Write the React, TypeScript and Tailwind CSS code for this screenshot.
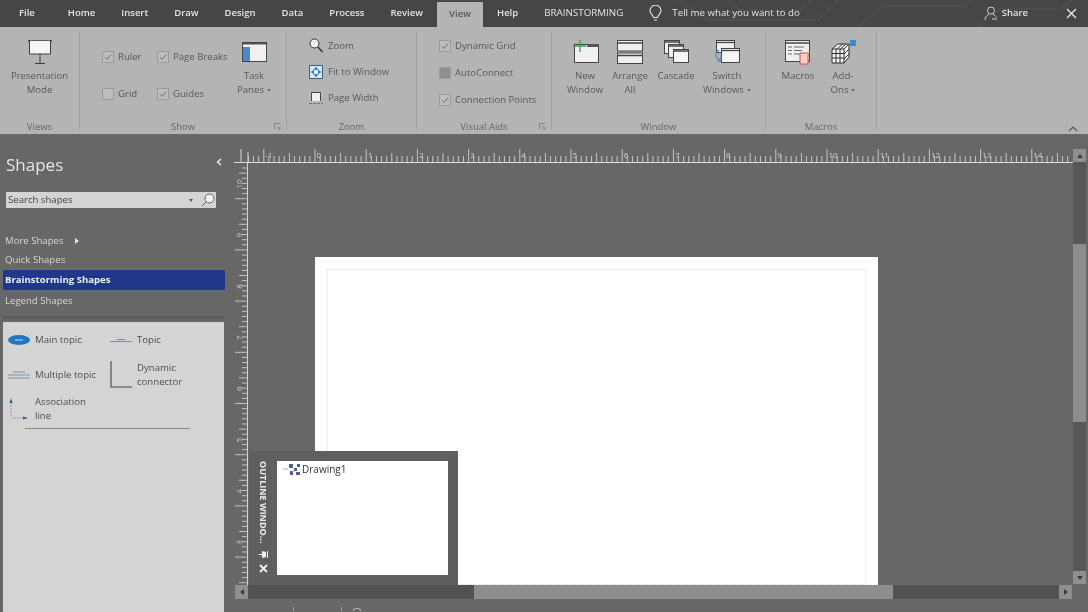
import type { ReactNode } from "react";

const tabs = ["Home", "Insert", "Draw", "Design", "Data", "Process", "Review"];

const hTicks = Array.from({ length: 170 }, (_, i) => i);
const hLabels = Array.from({ length: 17 }, (_, i) => i - 2);
const vLabels = [10, 9, 8, 7, 6, 5, 4, 3];

const Check = ({ on, dark }: { on?: boolean; dark?: boolean }) => (
  <span
    className={`flex h-[12px] w-[12px] shrink-0 items-center justify-center border border-[#9a9a9a] ${
      dark ? "bg-[#8f8f8f]" : "bg-[#bdbdbd]"
    }`}
  >
    {on && (
      <svg width="10" height="10" viewBox="0 0 10 10" fill="none">
        <path d="M2 5.2 4.2 7.4 8.2 2.6" stroke="#6e6e6e" strokeWidth="1" />
      </svg>
    )}
  </span>
);

const CheckRow = ({ label, on, dark }: { label: string; on?: boolean; dark?: boolean }) => (
  <div className="flex items-center gap-[4px] whitespace-nowrap">
    <Check on={on} dark={dark} />
    <span>{label}</span>
  </div>
);

const Caret = () => <span className="ml-[3px] inline-block h-0 w-0 border-x-[2.5px] border-t-[3px] border-x-transparent border-t-[#707070] align-middle" />;

const BigButton = ({ icon, lines, caret, w }: { icon: ReactNode; lines: string[]; caret?: boolean; w: string }) => (
  <div className={`flex shrink-0 flex-col items-center ${w}`}>
    <div className="flex h-[28px] items-center justify-center">{icon}</div>
    <div className="mt-[3px] flex flex-col items-center leading-[14px]">
      {lines.map((l, i) => (
        <span key={l} className="whitespace-nowrap">
          {l}
          {caret && i === lines.length - 1 && <Caret />}
        </span>
      ))}
    </div>
  </div>
);

const Launcher = () => (
  <svg className="absolute bottom-0 right-[5px]" width="7" height="7" viewBox="0 0 7 7" fill="none" stroke="#7a7a7a" strokeWidth="0.8">
    <path d="M.5 6V.5H6M3 3l3 3M6 3.5V6H3.5" />
  </svg>
);

const Group = ({ label, w, launcher, children }: { label: string; w: string; launcher?: boolean; children: ReactNode }) => (
  <div className={`relative flex h-[98px] shrink-0 flex-col border-r border-[#a0a0a0] ${w}`}>
    <div className="flex-1">{children}</div>
    <div className="-mb-[4px] text-center text-[9.5px] leading-[14px] text-[#666666]">{label}</div>
    {launcher && <Launcher />}
  </div>
);

const Ruler = () => (
  <svg width="839" height="15" className="block">
    <line x1="0" x2="839" y1="14.5" y2="14.5" stroke="#dedede" />
    <line x1="7" x2="7" y1="1" y2="15" stroke="#d8d8d8" />
    <line x1="14" x2="14" y1="4" y2="15" stroke="#d8d8d8" />
    {hTicks.map((i) => {
      const x = 81 + ((i - 20) * 51.2) / 10;
      if (x < 14 || x > 838) return null;
      const n = i % 10;
      const h = n === 0 ? 13 : n === 5 ? 9 : 6;
      return <line key={i} x1={x} x2={x} y1={14 - h} y2="14" stroke="#d0d0d0" strokeWidth="0.9" />;
    })}
    {hLabels.map((n) => {
      const x = 81 + n * 51.2;
      if (x < 14) return null;
      return (
        <text key={n} x={x + 1.5} y="9.5" fontSize="8" fill="#d4d4d4" fontFamily="Open Sans, sans-serif">
          {n}
        </text>
      );
    })}
  </svg>
);

const VRuler = () => (
  <svg width="14" height="422" className="block shrink-0">
    <line x1="13.5" x2="13.5" y1="0" y2="422" stroke="#d4d4d4" />
    {Array.from({ length: 84 }, (_, i) => i).map((i) => {
      const y = 5 + i * 5.12;
      const n = i % 10;
      const w = n === 6 ? 13 : n === 1 ? 9 : 6;
      return <line key={i} x1={14 - w} x2="14" y1={y} y2={y} stroke="#cdcdcd" strokeWidth="0.9" />;
    })}
    {vLabels.map((n, i) => (
      <text
        key={n}
        x="0"
        y="0"
        fontSize="8"
        fill="#d0d0d0"
        fontFamily="Open Sans, sans-serif"
        textAnchor="middle"
        transform={`translate(8 ${21 + i * 51.2}) rotate(-90)`}
      >
        {n}
      </text>
    ))}
  </svg>
);

const Arrow = ({ dir }: { dir: "up" | "down" | "left" | "right" }) => {
  const rot = { up: 0, right: 90, down: 180, left: 270 }[dir];
  return (
    <svg width="8" height="8" viewBox="0 0 8 8" style={{ transform: `rotate(${rot}deg)` }}>
      <path d="M4 2 7 6H1z" fill="#3c3c3c" />
    </svg>
  );
};

export default function App() {
  return (
    <div className="flex h-[612px] w-[1088px] flex-col overflow-hidden bg-[#676767] font-['Open_Sans',sans-serif] blur-[0.4px]">
      {/* title + tabs */}
      <div className="relative flex h-[27px] shrink-0 items-center bg-[#464646] text-[9.5px] font-semibold text-[#e4e4e4]">
        <svg className="absolute right-0 top-0" width="450" height="27" fill="none" stroke="#555555" strokeWidth="1">
          <path d="M40 0 70 20H180L200 0M90 0l12 10h60L175 0M220 27 245 6h80l10-6M340 27l22-18h60l12-9" />
        </svg>
        <span className="ml-[19px] mr-[20px]">File</span>
        {tabs.map((t) => (
          <span key={t} className="px-[13px]">
            {t}
          </span>
        ))}
        <span className="ml-[1px] mt-[2px] flex h-[25px] w-[46px] items-center justify-center self-end bg-[#b4b4b4] text-[#555555]">View</span>
        <span className="px-[14px]">Help</span>
        <span className="ml-[12px] text-[9.8px] font-normal">BRAINSTORMING</span>
        <svg className="ml-[26px]" width="13" height="17" viewBox="0 0 13 17" fill="none" stroke="#e4e4e4" strokeWidth="1.1">
          <path d="M4.5 12.5C4.3 10 1 8.8 1 5.8a5.5 5.5 0 0 1 11 0c0 3-3.3 4.2-3.5 6.7zM5 15h3" />
        </svg>
        <span className="relative ml-[10px] text-[9.7px] font-normal">Tell me what you want to do</span>
        <div className="relative ml-auto flex items-center">
          <svg width="14" height="15" viewBox="0 0 14 15" fill="none" stroke="#cfcfcf" strokeWidth="1">
            <circle cx="7" cy="4.5" r="3.5" />
            <path d="M1 14c0-3 2-5 4-5.500M9 8.500c1.500.5 3 1.500 3.500 3M8 13h5" />
          </svg>
          <span className="ml-[4px]">Share</span>
          <svg className="ml-[38px] mr-[11px]" width="11" height="11" viewBox="0 0 11 11" stroke="#e8e8e8" strokeWidth="1.4">
            <path d="M1 1l9 9M10 1l-9 9" />
          </svg>
        </div>
      </div>

      {/* ribbon */}
      <div className="relative flex h-[107px] shrink-0 items-start bg-[#b4b4b4] pt-[5px] text-[9.6px] leading-[14px] text-[#585858]">
        <Group label="Views" w="w-[80px]">
          <div className="pt-[6px]">
            <BigButton
              w="w-[79px]"
              lines={["Presentation", "Mode"]}
              icon={
                <svg width="26" height="25" viewBox="0 0 26 25" fill="none" stroke="#3f3f3f" strokeWidth="1">
                  <path d="M1 1h24" strokeWidth="1.5" />
                  <path d="M2.500 1v13h21V1" fill="#f4f4f4" />
                  <path d="M13 14v9M8 23.500h10" />
                </svg>
              }
            />
          </div>
        </Group>

        <Group label="Show" w="w-[207px]" launcher>
          <div className="flex pt-[6px]">
            <div className="ml-[22px] flex w-[55px] flex-col gap-[23px] pt-[12px]">
              <CheckRow label="Ruler" on />
              <CheckRow label="Grid" />
            </div>
            <div className="flex w-[72px] flex-col gap-[23px] pt-[12px]">
              <CheckRow label="Page Breaks" on />
              <CheckRow label="Guides" on />
            </div>
            <BigButton
              w="w-[50px]"
              lines={["Task", "Panes"]}
              caret
              icon={
                <svg width="25" height="20" viewBox="0 0 25 20">
                  <rect x="0.500" y="0.500" width="24" height="19" fill="#f0f0f0" stroke="#444" />
                  <rect x="1" y="1" width="23" height="1.500" fill="#555" />
                  <rect x="1" y="5" width="7" height="14" fill="#4a8ac8" />
                </svg>
              }
            />
          </div>
        </Group>

        <Group label="Zoom" w="w-[130px]">
          <div className="flex flex-col gap-[12px] pl-[22px] pt-[6px]">
            <div className="flex items-center gap-[5px]">
              <svg width="14" height="15" viewBox="0 0 14 15" fill="none" stroke="#333" strokeWidth="1">
                <circle cx="5.500" cy="5.500" r="4.500" fill="#f2f2f2" />
                <path d="M9 9l4.500 5" strokeWidth="1.500" />
              </svg>
              <span>Zoom</span>
            </div>
            <div className="flex items-center gap-[5px]">
              <svg width="14" height="14" viewBox="0 0 14 14">
                <rect x="0.500" y="0.500" width="13" height="13" fill="#dbe7f2" stroke="#3d5f85" />
                <path d="M7 1.500 9.500 5h-5zM7 12.500 4.500 9h5zM1.500 7 5 4.500v5zM12.500 7 9 9.500v-5z" fill="#3f82c4" />
                <circle cx="7" cy="7" r="1.500" fill="#fff" />
              </svg>
              <span>Fit to Window</span>
            </div>
            <div className="flex items-center gap-[5px]">
              <svg width="14" height="14" viewBox="0 0 14 14" fill="none">
                <path d="M2.500 10V1.500h9V10" fill="#efefef" stroke="#444" />
                <path d="M0 12.500h14" stroke="#3f82c4" strokeWidth="1.200" strokeDasharray="3 1" />
              </svg>
              <span>Page Width</span>
            </div>
          </div>
        </Group>

        <Group label="Visual Aids" w="w-[135px]" launcher>
          <div className="flex flex-col gap-[13px] pl-[22px] pt-[7px]">
            <CheckRow label="Dynamic Grid" on />
            <CheckRow label="AutoConnect" dark />
            <CheckRow label="Connection Points" on />
          </div>
        </Group>

        <Group label="Window" w="w-[214px]">
          <div className="flex pl-[10px] pt-[6px]">
            <BigButton
              w="w-[46px]"
              lines={["New", "Window"]}
              icon={
                <svg width="27" height="24" viewBox="0 0 27 24">
                  <rect x="2.500" y="4.500" width="24" height="18" fill="#f0f0f0" stroke="#444" />
                  <rect x="15" y="4" width="12" height="3" fill="#555" />
                  <path d="M8 0v12M1 6h13" stroke="#35a04a" strokeWidth="1.300" />
                </svg>
              }
            />
            <BigButton
              w="w-[44px]"
              lines={["Arrange", "All"]}
              icon={
                <svg width="26" height="24" viewBox="0 0 26 24" stroke="#444">
                  <rect x="0.500" y="0.500" width="25" height="10.500" fill="#efefef" />
                  <rect x="0.500" y="13" width="25" height="10.500" fill="#efefef" />
                  <path d="M1 3h24M1 15.500h24" strokeWidth="1.500" />
                </svg>
              }
            />
            <BigButton
              w="w-[48px]"
              lines={["Cascade"]}
              icon={
                <svg width="25" height="24" viewBox="0 0 25 24" stroke="#444">
                  <rect x="0.500" y="0.500" width="15" height="13" fill="#efefef" />
                  <rect x="4.500" y="4.500" width="15" height="13" fill="#efefef" />
                  <rect x="9.500" y="9.500" width="15" height="13" fill="#f5f5f5" />
                  <path d="M1 2h14M5 6h14M10 11h14" strokeWidth="1.300" />
                </svg>
              }
            />
            <BigButton
              w="w-[54px]"
              lines={["Switch", "Windows"]}
              caret
              icon={
                <svg width="26" height="25" viewBox="0 0 26 25" fill="none" stroke="#444">
                  <rect x="2.500" y="0.500" width="18" height="12" fill="#efefef" />
                  <path d="M3 2.500h17" strokeWidth="1.300" />
                  <rect x="7.500" y="8.500" width="18" height="14" fill="#f5f5f5" />
                  <path d="M8 10.500h17" strokeWidth="1.300" />
                  <path d="M5 10c-4 2-4 7-1 9l3 2M7 17v4H3" stroke="#4a7fc0" strokeWidth="1.200" />
                </svg>
              }
            />
          </div>
        </Group>

        <Group label="Macros" w="w-[111px]">
          <div className="flex pl-[10px] pt-[6px]">
            <BigButton
              w="w-[44px]"
              lines={["Macros"]}
              icon={
                <svg width="27" height="25" viewBox="0 0 27 25">
                  <rect x="0.500" y="0.500" width="24" height="21" fill="#efefef" stroke="#444" />
                  <path d="M1 3h23" stroke="#444" strokeWidth="1.500" />
                  <path d="M3 7h4M9 7h10M3 10.500h4M9 10.500h8M3 14h4M9 14h6" stroke="#666" />
                  <path d="M15 13h10l-2 2v9h-8z" fill="#f5cfc9" stroke="#d84e3c" />
                </svg>
              }
            />
            <BigButton
              w="w-[46px]"
              lines={["Add-", "Ons"]}
              caret
              icon={
                <svg width="25" height="24" viewBox="0 0 25 24" fill="#f2f2f2" stroke="#2e2e2e" strokeWidth="1">
                  <path d="M1 9l6-5h11v13l-5 6H1z" />
                  <path d="M1 9h12v14M13 9l5-5M5 9v14M9 9v14M1 13.500h12M1 18h12M13 14l5-5M13 19l5-5M11.500 4 6 9M15 4 9.500 9" fill="none" />
                  <rect x="19" y="0" width="6" height="6" fill="#3f86cc" stroke="none" />
                </svg>
              }
            />
          </div>
        </Group>

        <svg className="absolute bottom-[2px] right-[10px]" width="10" height="6" viewBox="0 0 10 6" fill="none" stroke="#555" strokeWidth="1.100">
          <path d="M1 5l4-4 4 4" />
        </svg>
      </div>

      {/* body */}
      <div className="flex min-h-0 flex-1">
        {/* shapes pane */}
        <aside className="flex w-[225px] shrink-0 flex-col text-[9.6px] text-[#d6d6d6]">
          <div className="flex items-center justify-between pl-[6px] pr-[3px] pt-[17px]">
            <span className="text-[17px] leading-[28px] text-[#e6e6e6]">Shapes</span>
            <svg className="mb-[6px]" width="6" height="8" viewBox="0 0 6 8" fill="none" stroke="#f0f0f0" strokeWidth="1.400">
              <path d="M5 1 1.500 4 5 7" />
            </svg>
          </div>
          <div className="ml-[6px] mt-[13px] flex h-[16px] w-[210px] items-center bg-[#d4d4d4] pl-[2px] pr-[1px] text-[#444444]">
            <span className="pt-px">Search shapes</span>
            <span className="ml-auto mr-[8px] h-0 w-0 border-x-[2.5px] border-t-[3px] border-x-transparent border-t-[#555555]" />
            <svg width="14" height="14" viewBox="0 0 14 14" fill="#f2f2f2" stroke="#555" strokeWidth="0.900">
              <circle cx="8.500" cy="5.500" r="4.500" />
              <path d="M5 9l-4 4" />
            </svg>
          </div>
          <div className="mt-[26px] flex h-[14px] items-center pl-[5px] leading-[14px]">
            More Shapes
            <span className="ml-[11px] h-0 w-0 border-y-[3px] border-l-[4px] border-y-transparent border-l-[#e0e0e0]" />
          </div>
          <div className="mt-[2px] h-[20px] pl-[5px] leading-[20px]">Quick Shapes</div>
          <div className="ml-[3px] h-[20px] bg-[#20388c] pl-[2px] font-bold leading-[20px] text-[#f0f0f0]">Brainstorming Shapes</div>
          <div className="h-[21px] pl-[5px] leading-[21px]">Legend Shapes</div>
          <div className="ml-[3px] mt-[5px] h-[3px] w-[221px] bg-[#5a5a5a]" />
          <div className="ml-[3px] mr-px mt-[3px] flex-1 bg-[#d4d4d4] pt-[11px] leading-[14px] text-[#4e4e4e]">
            <div className="grid w-[221px] grid-cols-[107px_1fr]">
              <div className="flex h-[14px] items-center">
                <svg className="ml-[5px] mr-[5px] shrink-0" width="22" height="10" viewBox="0 0 22 10">
                  <ellipse cx="11" cy="5" rx="11" ry="5" fill="#1f78c4" />
                  <path d="M7 5h8" stroke="#bfe0f5" />
                </svg>
                <span>Main topic</span>
              </div>
              <div className="flex h-[14px] items-center">
                <svg className="mr-[5px] shrink-0" width="22" height="5" viewBox="0 0 22 5" stroke="#7b8d9e">
                  <path d="M0 3.500h22M7 1.500h8" />
                </svg>
                <span>Topic</span>
              </div>
              <div className="mt-[8px] flex h-[40px] items-center">
                <svg className="ml-[5px] mr-[5px] shrink-0" width="22" height="9" viewBox="0 0 22 9" stroke="#7f95a8">
                  <path d="M5 1h12M0 4h22M0 7h22" />
                </svg>
                <span>Multiple topic</span>
              </div>
              <div className="mt-[8px] flex h-[40px] items-center">
                <svg className="mb-[2px] mr-[5px] shrink-0" width="22" height="27" viewBox="0 0 22 27" fill="none" stroke="#444" strokeWidth="1.100">
                  <path d="M1 0v26h21" />
                </svg>
                <span>
                  Dynamic
                  <br />
                  connector
                </span>
              </div>
              <div className="flex h-[28px] items-center">
                <svg className="ml-[5px] mr-[6px] shrink-0" width="21" height="24" viewBox="0 0 21 24" fill="none">
                  <path d="M3 5v13c0 2 1 3 3 3h10" stroke="#8ea0b0" strokeDasharray="2 1" />
                  <path d="M3 1l1.500 5h-3zM20 21l-5 1.500v-3z" fill="#2a5a8c" />
                </svg>
                <span>
                  Association
                  <br />
                  line
                </span>
              </div>
            </div>
            <div className="ml-[22px] mt-[5px] h-px w-[165px] bg-[#8a8a8a]" />
          </div>
        </aside>

        {/* drawing area */}
        <div className="flex w-[863px] shrink-0 flex-col pl-[9px] pt-[14px]">
          <div className="flex h-[437px] shrink-0">
            <div className="flex w-[839px] shrink-0 flex-col">
              <Ruler />
              <div className="flex min-h-0 flex-1">
                <VRuler />
                <div className="relative min-w-0 flex-1 overflow-hidden">
                  <div className="ml-[67px] mt-[94px] h-[340px] w-[563px] bg-white p-[12px]">
                    <div className="h-full border border-dotted border-[#dcdcdc]" />
                  </div>
                  {/* floating outline window */}
                  <div className="absolute bottom-0 left-[1px] flex h-[134px] w-[209px] bg-[#5f5f5f] py-[10px] pl-[9px] pr-[10px]">
                    <div className="mr-[9px] flex w-[10px] shrink-0 flex-col items-center justify-between pb-[2px]">
                      <span className="whitespace-nowrap text-[9px] font-bold leading-[10px] text-[#ececec] [writing-mode:vertical-rl]">OUTLINE WINDO...</span>
                      <div className="flex flex-col items-center gap-[6px]">
                        <svg width="9" height="7" viewBox="0 0 9 7" fill="#efefef">
                          <path d="M0 3h3V0l4 1v5l-4 1V4H0zM8 0h1v7H8z" />
                        </svg>
                        <svg width="9" height="9" viewBox="0 0 9 9" stroke="#f2f2f2" strokeWidth="1.800">
                          <path d="M1 1l7 7M8 1 1 8" />
                        </svg>
                      </div>
                    </div>
                    <div className="flex-1 bg-white pl-[6px] pt-px">
                      <div className="flex items-center text-[10px] leading-[14px] text-[#333333]">
                        <svg className="mr-[2px]" width="17" height="11" viewBox="0 0 17 11">
                          <path d="M0 5h5" stroke="#aaa" />
                          <path d="M6 0h4v4H6zM11 4h3v3h-3zM7 7h3v4H7zM13 8h4v3h-4zM14 0h3v3h-3z" fill="#4c5c9c" />
                          <path d="M9 3l3 2M11 7 9 8" stroke="#8a96c4" />
                        </svg>
                        Drawing1
                      </div>
                    </div>
                  </div>
                </div>
              </div>
            </div>
            {/* vertical scrollbar */}
            <div className="my-px flex w-[13px] shrink-0 flex-col bg-[#575757]">
              <div className="flex h-[13px] items-center justify-center bg-[#8f8f8f]">
                <Arrow dir="up" />
              </div>
              <div className="mt-[82px] h-[178px] bg-[#8d8d8d]" />
              <div className="mt-auto flex h-[13px] items-center justify-center bg-[#8f8f8f]">
                <Arrow dir="down" />
              </div>
            </div>
          </div>

          {/* horizontal scrollbar */}
          <div className="ml-px flex h-[14px] w-[837px] shrink-0 bg-[#525252]">
            <div className="flex w-[13px] items-center justify-center bg-[#8f8f8f]">
              <Arrow dir="left" />
            </div>
            <div className="ml-[226px] w-[419px] bg-[#8d8d8d]" />
            <div className="ml-auto flex w-[13px] items-center justify-center bg-[#8f8f8f]">
              <Arrow dir="right" />
            </div>
          </div>

          {/* status bar, cut by the window edge */}
          <div className="flex h-[12px] items-end pl-[59px]">
            <span className="h-[4px] w-px bg-[#a0a0a0]" />
            <span className="ml-[47px] h-[4px] w-px bg-[#a0a0a0]" />
            <span className="ml-[11px] h-[3px] w-[8px] rounded-t-full border border-b-0 border-[#b0b0b0]" />
          </div>
        </div>
      </div>
    </div>
  );
}
